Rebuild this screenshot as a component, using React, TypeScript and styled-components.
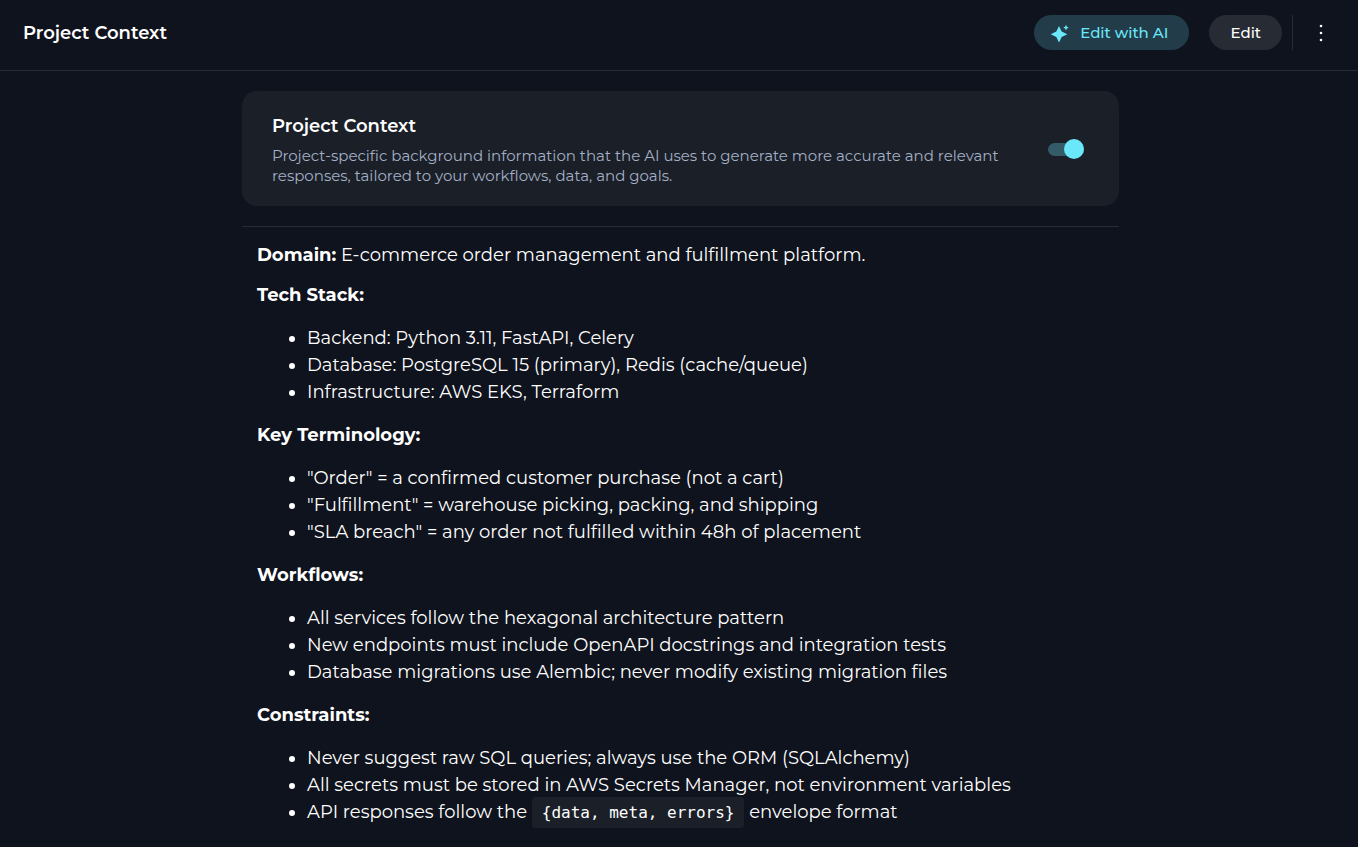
import React, { useState } from "react";
import styled, { createGlobalStyle } from "styled-components";

const GlobalStyle = createGlobalStyle`
  *, *::before, *::after { box-sizing: border-box; }
  body {
    margin: 0;
    background: #0f131d;
    color: #ffffff;
    font-family: Montserrat, Inter, sans-serif;
  }
`;

const Header = styled.header`
  display: flex;
  align-items: center;
  justify-content: space-between;
  padding: 15px 20px 20px 23px;
  border-bottom: 1px solid #272b34;
`;

const PageTitle = styled.h1`
  margin: 0;
  font-size: 18px;
  line-height: 24px;
  font-weight: 600;
`;

const Actions = styled.div`
  display: flex;
  align-items: center;
`;

const PillButton = styled.button<{ $accent?: boolean }>`
  display: flex;
  align-items: center;
  gap: 10px;
  height: 35px;
  margin-right: ${(p) => (p.$accent ? "20px" : "10px")};
  padding: ${(p) => (p.$accent ? "0 21px 0 16px" : "0 21px")};
  border: 0;
  border-radius: 18px;
  background: ${(p) => (p.$accent ? "#223c49" : "#272b34")};
  color: ${(p) => (p.$accent ? "#6ae8fa" : "#ffffff")};
  font-family: inherit;
  font-size: 15px;
  line-height: 20px;
  font-weight: 500;
  cursor: pointer;
`;

const MenuButton = styled.button`
  display: flex;
  align-items: center;
  justify-content: flex-end;
  width: 46px;
  height: 35px;
  padding: 0 14px 0 0;
  border: 0;
  border-left: 1px solid #272b34;
  background: transparent;
  color: #ffffff;
  cursor: pointer;
`;

const Main = styled.main`
  max-width: 920px;
  margin: 0 auto;
  padding: 20px 20px 20px 23px;
`;

const Card = styled.section`
  display: flex;
  align-items: center;
  justify-content: space-between;
  gap: 30px;
  padding: 21px 35px 20px 30px;
  border-radius: 15px;
  background: #1b1f28;
`;

const CardText = styled.div`
  max-width: 740px;
`;

const CardTitle = styled.h2`
  margin: 0 0 5px;
  font-size: 18px;
  line-height: 29px;
  font-weight: 600;
`;

const Description = styled.p`
  margin: 0;
  color: #a3b0c5;
  font-size: 15px;
  line-height: 20px;
`;

const Switch = styled.input`
  appearance: none;
  flex: none;
  display: grid;
  align-items: center;
  width: 36px;
  height: 20px;
  margin: 0;
  cursor: pointer;

  &::before,
  &::after {
    content: "";
    grid-area: 1 / 1;
  }
  &::before {
    height: 13px;
    border-radius: 7px;
    background: #335b68;
  }
  &::after {
    width: 20px;
    height: 20px;
    border-radius: 50%;
    background: #a3b0c5;
  }
  &:checked::after {
    justify-self: end;
    background: #6ae8fa;
  }
`;

const Article = styled.article`
  margin-top: 20px;
  padding: 15px;
  border-top: 1px solid #272b34;
  font-size: 18px;
  line-height: 27px;
`;

const Paragraph = styled.p`
  margin: 0 0 13px;
`;

const SectionTitle = styled.h3`
  margin: 0 0 16px;
  font-size: inherit;
  line-height: inherit;
  font-weight: 700;
`;

const List = styled.ul`
  margin: 0 0 16px;
  padding: 0 0 0 50px;
`;

const Code = styled.code`
  padding: 6px 10px;
  border-radius: 4px;
  background: #1b1f28;
  font-family: Consolas, "DejaVu Sans Mono", monospace;
  font-size: 16px;
  line-height: 18px;
`;

const sections: { title: string; items: React.ReactNode[] }[] = [
  {
    title: "Tech Stack:",
    items: [
      "Backend: Python 3.11, FastAPI, Celery",
      "Database: PostgreSQL 15 (primary), Redis (cache/queue)",
      "Infrastructure: AWS EKS, Terraform",
    ],
  },
  {
    title: "Key Terminology:",
    items: [
      '"Order" = a confirmed customer purchase (not a cart)',
      '"Fulfillment" = warehouse picking, packing, and shipping',
      '"SLA breach" = any order not fulfilled within 48h of placement',
    ],
  },
  {
    title: "Workflows:",
    items: [
      "All services follow the hexagonal architecture pattern",
      "New endpoints must include OpenAPI docstrings and integration tests",
      "Database migrations use Alembic; never modify existing migration files",
    ],
  },
  {
    title: "Constraints:",
    items: [
      "Never suggest raw SQL queries; always use the ORM (SQLAlchemy)",
      "All secrets must be stored in AWS Secrets Manager, not environment variables",
      <>
        API responses follow the <Code>{"{data, meta, errors}"}</Code> envelope format
      </>,
    ],
  },
];

function SparkleIcon() {
  return (
    <svg width="20" height="20" viewBox="0 0 20 20" fill="currentColor" aria-hidden="true">
      <path d="M9 3 L11.7 8.6 L17.3 11.3 L11.7 14 L9 19.6 L6.3 14 L0.7 11.3 L6.3 8.6Z" />
      <path d="M16 1.8 L16.9 3.7 L18.8 4.6 L16.9 5.5 L16 7.4 L15.1 5.5 L13.2 4.6 L15.1 3.7Z" />
    </svg>
  );
}

function DotsIcon() {
  return (
    <svg width="6" height="21" viewBox="0 0 6 21" fill="currentColor" aria-hidden="true">
      <circle cx="3" cy="4" r="1.3" />
      <circle cx="3" cy="11" r="1.3" />
      <circle cx="3" cy="18" r="1.3" />
    </svg>
  );
}

export default function App() {
  const [enabled, setEnabled] = useState(true);
  return (
    <>
      <GlobalStyle />
      <Header>
        <PageTitle>Project Context</PageTitle>
        <Actions>
          <PillButton type="button" $accent>
            <SparkleIcon />
            Edit with AI
          </PillButton>
          <PillButton type="button">Edit</PillButton>
          <MenuButton type="button" aria-label="More options">
            <DotsIcon />
          </MenuButton>
        </Actions>
      </Header>
      <Main>
        <Card>
          <CardText>
            <CardTitle id="context-title">Project Context</CardTitle>
            <Description>
              Project-specific background information that the AI uses to generate more accurate and
              relevant responses, tailored to your workflows, data, and goals.
            </Description>
          </CardText>
          <Switch
            type="checkbox"
            role="switch"
            aria-labelledby="context-title"
            checked={enabled}
            onChange={(e) => setEnabled(e.target.checked)}
          />
        </Card>
        <Article>
          <Paragraph>
            <strong>Domain:</strong> E-commerce order management and fulfillment platform.
          </Paragraph>
          {sections.map((section) => (
            <section key={section.title}>
              <SectionTitle>{section.title}</SectionTitle>
              <List>
                {section.items.map((item, i) => (
                  <li key={i}>{item}</li>
                ))}
              </List>
            </section>
          ))}
        </Article>
      </Main>
    </>
  );
}
